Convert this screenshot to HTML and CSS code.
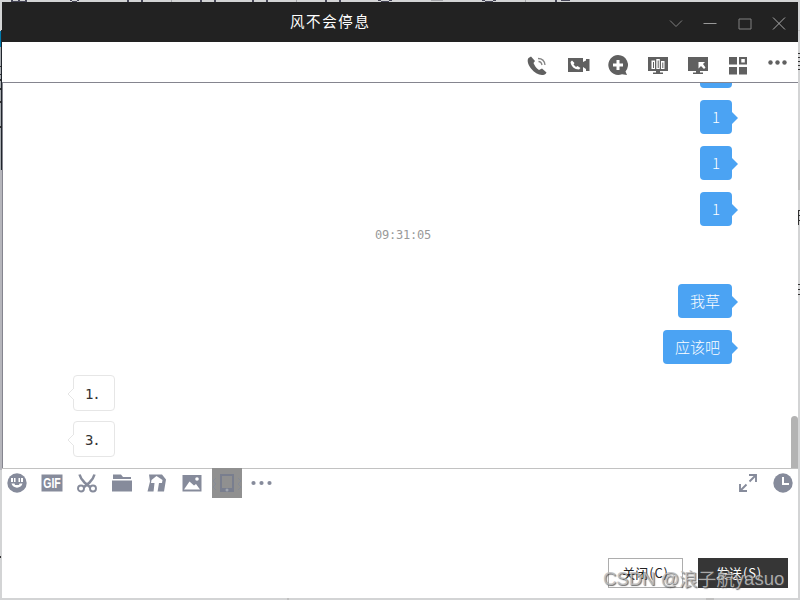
FILE: index.html
```
<!DOCTYPE html>
<html lang="zh-CN">
<head>
<meta charset="utf-8">
<title>风不会停息</title>
<link rel="stylesheet" href="styles.css">
</head>
<body>
<svg class="desktop" viewBox="0 0 800 600" aria-hidden="true">
  <path fill="#d3d4d5" d="M0 0h800v600H0z"/>
  <path fill="#474758" d="M11 0h2v2h-2zM18 0h2v2h-2zM25 0h2v2h-2zM12 1h14v1H12zM70 0h2v1h-2zM72 1h5v1h-5zM77 0h2v1h-2zM127 0h2v2h-2zM141 0h2v2h-2zM200 0h2v2h-2zM214 0h2v2h-2zM252 0h2v2h-2zM266 0h2v2h-2zM325 0h2v2h-2zM339 0h2v2h-2zM378 0h3v1h-3zM381 1h8v1h-8zM389 0h3v1h-3zM482 0h3v1h-3zM485 1h8v1h-8zM493 0h3v1h-3zM555 0h2v2h-2zM561 0h9v1h-9z"/>
  <path fill="#a5a6aa" d="M171 0h1v2h-1zM296 0h1v2h-1zM431 0h12v1h-12zM525 0h1v2h-1z"/>
  <path fill="#0079aa" d="M0 31h1v16H0z"/>
  <path fill="#a9adb2" d="M0 47h1v123H0z"/>
  <path fill="#20252c" d="M1 30h1v140H1z"/>
  <path fill="#b6b6bc" d="M0 170h2v300H0z"/>
  <path fill="#333" d="M0 66h1v1H0zM0 74h1v1H0zM0 79h1v2H0zM0 88h1v2H0zM0 101h1v2H0zM0 126h1v2H0z"/>
  <path fill="#c0c0c0" d="M798 30h2v1h-2zM798 160h2v30h-2zM706 598h8v2h-8zM287 598h2v2h-2z"/>
  <path fill="#333" d="M798 53h2v1h-2zM798 57h2v1h-2zM798 61h2v1h-2zM798 65h2v1h-2zM798 69h2v1h-2zM798 210h1v15h-1zM798 210h2v1h-2zM798 215h2v1h-2zM798 220h2v1h-2zM798 284h2v1h-2zM798 289h2v1h-2zM798 294h2v1h-2zM0 556h1v2H0z"/>
</svg>
<main class="window">
  <header class="titlebar">
    <h1 class="title">风不会停息</h1>
    <div class="controls">
      <svg viewBox="0 0 14 14"><path d="M1 4.500l6 6 6-6"/></svg>
      <svg viewBox="0 0 14 14"><path stroke="#999" d="M.5 7.500h13"/></svg>
      <svg viewBox="0 0 14 14"><path d="M1 3h12v10H1z"/></svg>
      <svg viewBox="0 0 14 14"><path stroke="#aaa" d="M1 1.500l12 12M13 1.500l-12 12"/></svg>
    </div>
  </header>

  <nav class="callbar">
    <svg viewBox="0 0 20 20"><path d="M3 1.500L.5 3C-1 5-.5 9 3 13.500S11 20.500 15 20c1.500-.2 3-1 3.500-2.500L14 13.500l-3 1.500C8 13 6.500 10.500 5.500 8L7 6z"/><path class="line" d="M10.500 6.500c2 0 3 1 3.500 3.500M10 3.500c4 0 6.500 2 7 6.500"/></svg>
    <svg viewBox="0 0 20 20"><path d="M0 3h15v4l3-1.500V4h3.500v12H18v-2l-3-2v5H0z"/><path fill="#fff" d="M4 5.500L2.500 7c.5 4.500 4 7.500 8.500 7.500l1.500-1.500-3-2-1.500 1L5.500 9.500l1-1.500z"/></svg>
    <svg viewBox="0 0 20 20"><path d="M10 0a10 10 0 1 0 4 19.300l5 .7-1.500-3.500A10 10 0 0 0 10 0z"/><path fill="#fff" d="M8.500 5h3v3.500H15v3h-3.500V15h-3v-3.500H5v-3h3.500z"/></svg>
    <svg viewBox="0 0 20 20"><path d="M0 2h20v14h-8v1.500h3V19H5v-1.500h3V16H0z"/><path fill="#fff" d="M3.500 5.500H7V14H3.500zM8.300 4h3.500v10H8.300zM13 6h3.500v8H13z"/><path d="M5 7h1v6H5zM9.700 5.500h1V13h-1zM14.300 7.500h1V13h-1z"/></svg>
    <svg viewBox="0 0 20 20"><path d="M0 2h20v14h-8v1.500h3V19H5v-1.500h3V16H0z"/><path fill="#fff" d="M10.500 7H17l-2 2 2.500 3.500L16 14l-3-3-2.500 2.500z"/></svg>
    <svg viewBox="0 0 20 20"><path d="M1 2h8v7.500H1zM11 2h8v7.500h-8zM1 12h8v7.500H1zM11 12h8v7.500h-8z"/><path fill="#fff" d="M13.300 4h3.500v3.500h-3.500z"/></svg>
    <svg viewBox="0 0 20 20"><circle cx="2.500" cy="7.500" r="2.200"/><circle cx="9.500" cy="7.500" r="2.200"/><circle cx="16.500" cy="7.500" r="2.200"/></svg>
  </nav>

  <section class="chat">
    <p class="bubble sent">1</p>
    <p class="bubble sent">1</p>
    <p class="bubble sent">1</p>
    <p class="bubble sent">1</p>
    <time class="stamp">09:31:05</time>
    <p class="bubble sent">我草</p>
    <p class="bubble sent">应该吧</p>
    <p class="bubble received">1.<svg viewBox="0 0 7 14"><path d="M7 1L1 7l6 6"/></svg></p>
    <p class="bubble received">3.<svg viewBox="0 0 7 14"><path d="M7 1L1 7l6 6"/></svg></p>
    <i class="scroll-thumb"></i>
  </section>

  <section class="composer">
    <div class="tools">
      <span class="tool"><svg viewBox="0 0 20 20"><circle cx="10" cy="10" r="9.700"/><path fill="#fff" d="M4 5h2v4H4zM7 5h1.500v4H7zM11.500 5H13v4h-1.500zM14 5h2v4h-2zM4.500 10.500h3l.5 1.500h4l.5-1.500h3c-1 5.500-10 5.500-11 0z"/></svg></span>
      <span class="tool"><svg viewBox="0 0 20 20"><path d="M-.5 1.500h21v17h-21z"/><text class="gif" x="10" y="15.200" text-anchor="middle" textLength="17.500" lengthAdjust="spacingAndGlyphs">GIF</text></svg></span>
      <span class="tool"><svg viewBox="0 0 20 20"><path class="line thick" d="M2.500 1.500c1 4 3 6 5 8l6 5M17.500 1.500c-1 4-3 6-5 8l-6 5"/><circle class="line" cx="4" cy="15.500" r="3"/><circle class="line" cx="16" cy="15.500" r="3"/></svg></span>
      <span class="tool"><svg viewBox="0 0 20 20"><path d="M1 1.500h8l2 2.500h8v2H1zM0 7.500h20v11H0z"/></svg></span>
      <span class="tool"><svg viewBox="0 0 20 20"><path d="M2 1.500h13l4 5-2 12H.5L3 8.500z"/><path fill="#fff" d="M9.500 3l6 4-.5 3h-3l-1.500 9H6.500l1-9H4l.5-3z"/></svg></span>
      <span class="tool"><svg viewBox="0 0 20 20"><path d="M.5 2h19v16.500H.5z"/><path fill="#fff" d="M2 16.500l5.500-8 4.500 4 2-1.500 4 5.500z"/><circle cx="15" cy="6" r="1.800" fill="#fff"/></svg></span>
      <span class="tool active"><svg viewBox="0 0 20 20"><path fill="#797e8e" fill-rule="evenodd" d="M3 1h14v18H3zM5 3v12h10V3z"/><circle cx="10" cy="17" r="1.500" fill="#a0a5af"/><path class="shake" d="M-1 5l-3 3 3 3-3 3 3 3M21 5l3 3-3 3 3 3-3 3"/></svg></span>
      <span class="tool"><svg viewBox="0 0 20 20"><circle cx="1.500" cy="10" r="2.100"/><circle cx="9.500" cy="10" r="2.100"/><circle cx="17.500" cy="10" r="2.100"/></svg></span>
      <span class="tool push"><svg viewBox="0 0 20 20"><path class="line" d="M11 2h7v7M17.500 2.500l-6 6M9 18H2v-7M2.500 17.500l6-6"/></svg></span>
      <span class="tool"><svg viewBox="0 0 20 20"><circle cx="10" cy="10" r="9.700"/><path fill="none" stroke="#fff" stroke-width="2" d="M10 4v7h6"/></svg></span>
    </div>
    <div class="actions">
      <button class="btn">关闭<span>(C)</span></button>
      <button class="btn primary">发送<span>(S)</span></button>
    </div>
  </section>
</main>
<div class="watermark"><span>CSDN @</span><span class="han">浪子航</span><span>yasuo</span></div>
</body>
</html>
```
FILE: styles.css
```
* { box-sizing: border-box; }
body {
  margin: 0;
  width: 800px;
  height: 600px;
  padding: 2px;
  overflow: hidden;
  position: relative;
  font-family: "Liberation Sans", "Noto Sans CJK SC", sans-serif;
}
.desktop { position: absolute; left: 0; top: 0; width: 800px; height: 600px; }
.window {
  position: relative;
  width: 796px;
  height: 596px;
  display: flex;
  flex-direction: column;
  background: #fff;
}
.titlebar {
  height: 40px;
  display: flex;
  align-items: center;
  justify-content: space-between;
  padding: 0 12px 0 288px;
  background: #222;
}
.title {
  margin: -2px 0 0;
  color: #fff;
  font: 400 14.500px/38px "Noto Sans CJK SC", sans-serif;
  letter-spacing: 1.600px;
}
.controls { display: flex; gap: 20.500px; padding-top: 2px; }
.controls svg { width: 14px; height: 14px; fill: none; stroke: #808080; stroke-width: 1; }
.callbar {
  height: 41px;
  display: flex;
  gap: 20px;
  padding: 13px 0 0 526px;
  border-bottom: 1px solid #85858f;
}
.callbar svg { width: 20px; height: 20px; flex: none; overflow: visible; fill: #606060; }
.callbar .line { fill: none; stroke: #858585; stroke-width: 1.300; }
.chat {
  position: relative;
  height: 385px;
  overflow: hidden;
  display: flex;
  flex-direction: column;
  padding: 0 66px 0 70px;
  border-left: 1px solid #85858f;
}
.bubble {
  position: relative;
  flex: none;
  margin: 0 0 12px;
  height: 34px;
  padding: 0 12px;
  border-radius: 4px;
  font: 300 15px/34px "Noto Sans CJK SC", sans-serif;
}
.bubble:first-child { margin-top: -29px; }
.sent { align-self: flex-end; min-width: 32px; background: #4ba3f3; color: #fff; }
.sent::after {
  content: "";
  position: absolute;
  left: 100%;
  top: 12px;
  border: 6px solid transparent;
  border-left-color: #4ba3f3;
  border-right-width: 0;
}
.received {
  align-self: flex-start;
  width: 42px;
  height: 36px;
  margin: -1px 0 11px;
  border: 1px solid #e6e6e6;
  color: #333;
  padding-left: 11px;
  font: 14px/37px "DejaVu Sans Mono", monospace;
  letter-spacing: -1.200px;
}
.received svg { position: absolute; left: -7px; top: 11px; width: 7px; height: 14px; fill: #fff; stroke: #e6e6e6; }
.stamp {
  align-self: center;
  height: 46px;
  margin: -12px 0 12px;
  transform: translateX(.5px);
  color: #999;
  font: 12px/18px "DejaVu Sans Mono", monospace;
  letter-spacing: -.2px;
}
.scroll-thumb { position: absolute; right: 0; top: 333px; width: 7px; height: 52px; background: #b3b3b3; border-radius: 4px 4px 0 0; }
.composer {
  flex: 1;
  display: flex;
  flex-direction: column;
  justify-content: space-between;
  border-top: 1px solid #c2c2c2;
}
.tools { display: flex; gap: 5px; margin-top: -1px; }
.tool { display: flex; width: 30px; height: 30px; align-items: center; justify-content: center; }
.tool svg { width: 20px; height: 20px; overflow: visible; fill: #868b9b; }
.tool .line { fill: none; stroke: #868b9b; stroke-width: 1.900; }
.tool .thick { stroke-width: 2.500; }
.tool .gif { fill: #fff; font: bold 14.500px "Liberation Sans", sans-serif; }
.tool .shake { fill: none; stroke: #858b97; stroke-width: 1; }
.active { background: #909090; }
.push { margin-left: auto; }
.actions { display: flex; justify-content: flex-end; gap: 15px; padding: 0 10px 10px 0; }
.btn {
  width: 75px;
  height: 30px;
  padding: 0;
  border: 1px solid #adadad;
  background: #fff;
  color: #222;
  font: 13px/28px "Noto Sans CJK SC", sans-serif;
}
.btn span { margin-left: 1px; letter-spacing: .8px; }
.primary { width: 90px; padding-right: 8px; border-color: #363636; background: #363636; color: #fff; }
.watermark {
  position: absolute;
  left: 603px;
  top: 566px;
  display: flex;
  align-items: center;
  height: 26px;
  white-space: pre;
  color: rgba(190, 190, 190, .85);
  font-size: 18.500px;
  text-shadow: 1px 1px 1px rgba(70, 70, 70, .8);
}
.han { margin-top: -3px; font: 400 18.500px/26px "Noto Sans CJK SC", sans-serif; }
```
